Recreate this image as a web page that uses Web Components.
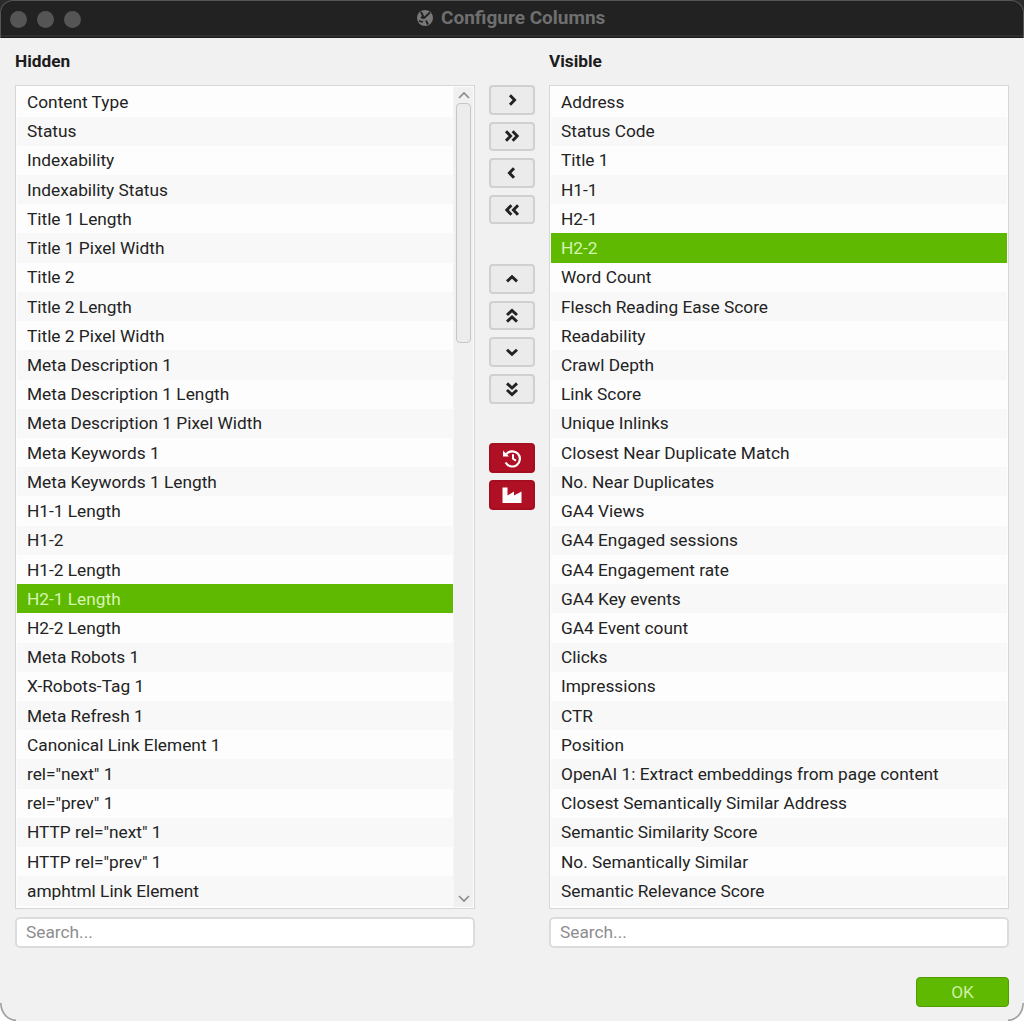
<!DOCTYPE html>
<html>
<head>
<meta charset="utf-8">
<title>Configure Columns</title>
<style>
html, body { margin: 0; padding: 0; background: #fff; }
body { font-family: Roboto, "Liberation Sans", sans-serif; font-size: 17.3px; color: #232323; }
</style>
</head>
<body>
<config-window>
  <title-bar slot="top">Configure Columns</title-bar>

  <column-pane slot="left" label="Hidden" scroll>
    <list-row>Content Type</list-row><list-row>Status</list-row><list-row>Indexability</list-row>
    <list-row>Indexability Status</list-row><list-row>Title 1 Length</list-row><list-row>Title 1 Pixel Width</list-row>
    <list-row>Title 2</list-row><list-row>Title 2 Length</list-row><list-row>Title 2 Pixel Width</list-row>
    <list-row>Meta Description 1</list-row><list-row>Meta Description 1 Length</list-row><list-row>Meta Description 1 Pixel Width</list-row>
    <list-row>Meta Keywords 1</list-row><list-row>Meta Keywords 1 Length</list-row><list-row>H1-1 Length</list-row>
    <list-row>H1-2</list-row><list-row>H1-2 Length</list-row><list-row selected>H2-1 Length</list-row>
    <list-row>H2-2 Length</list-row><list-row>Meta Robots 1</list-row><list-row>X-Robots-Tag 1</list-row>
    <list-row>Meta Refresh 1</list-row><list-row>Canonical Link Element 1</list-row><list-row>rel="next" 1</list-row>
    <list-row>rel="prev" 1</list-row><list-row>HTTP rel="next" 1</list-row><list-row>HTTP rel="prev" 1</list-row>
    <list-row>amphtml Link Element</list-row>
  </column-pane>

  <button-stack slot="middle">
    <nav-button icon="right"></nav-button>
    <nav-button icon="right2"></nav-button>
    <nav-button icon="left"></nav-button>
    <nav-button icon="left2"></nav-button>
    <nav-button icon="up" group></nav-button>
    <nav-button icon="up2"></nav-button>
    <nav-button icon="down"></nav-button>
    <nav-button icon="down2"></nav-button>
    <nav-button icon="history" group danger></nav-button>
    <nav-button icon="factory" danger></nav-button>
  </button-stack>

  <column-pane slot="right" label="Visible">
    <list-row>Address</list-row><list-row>Status Code</list-row><list-row>Title 1</list-row>
    <list-row>H1-1</list-row><list-row>H2-1</list-row><list-row selected>H2-2</list-row>
    <list-row>Word Count</list-row><list-row>Flesch Reading Ease Score</list-row><list-row>Readability</list-row>
    <list-row>Crawl Depth</list-row><list-row>Link Score</list-row><list-row>Unique Inlinks</list-row>
    <list-row>Closest Near Duplicate Match</list-row><list-row>No. Near Duplicates</list-row><list-row>GA4 Views</list-row>
    <list-row>GA4 Engaged sessions</list-row><list-row>GA4 Engagement rate</list-row><list-row>GA4 Key events</list-row>
    <list-row>GA4 Event count</list-row><list-row>Clicks</list-row><list-row>Impressions</list-row>
    <list-row>CTR</list-row><list-row>Position</list-row><list-row>OpenAI 1: Extract embeddings from page content</list-row>
    <list-row>Closest Semantically Similar Address</list-row><list-row>Semantic Similarity Score</list-row><list-row>No. Semantically Similar</list-row>
    <list-row>Semantic Relevance Score</list-row>
  </column-pane>

  <ok-button slot="bottom">OK</ok-button>
</config-window>

<script>
class ConfigWindow extends HTMLElement {
    constructor() {
        super();
        this.attachShadow({ mode: "open" }).innerHTML = `
        <style>
        :host {
            display: block;
            position: relative;
            width: 1024px;
            height: 1021px;
            overflow: hidden;
            background: #fff;
        }
        .sheet {
            display: flex;
            flex-direction: column;
            height: 1021px;
            box-sizing: border-box;
            background: #f1f1f1;
            border-radius: 0 0 15px 15px;
        }
        .columns {
            display: grid;
            grid-template-columns: 460px 74px 460px;
            padding: 0 15px;
        }
        .bottom {
            display: flex;
            justify-content: flex-end;
            padding: 29px 15px 0;
        }
        svg {
            position: absolute;
            bottom: 0;
            width: 18px;
            height: 18px;
        }
        .bl { left: 0; }
        .br { right: 0; transform: scaleX(-1); }
        </style>
        <div class="sheet">
            <slot name="top"></slot>
            <div class="columns">
                <slot name="left"></slot>
                <slot name="middle"></slot>
                <slot name="right"></slot>
            </div>
            <div class="bottom"><slot name="bottom"></slot></div>
        </div>
        <svg class="bl" viewBox="0 0 18 18"><path d="M0.8 0C1 9 7 17 16 17.4" fill="none" stroke="#a0a0a0" stroke-width="1.6"/></svg>
        <svg class="br" viewBox="0 0 18 18"><path d="M0.8 0C1 9 7 17 16 17.4" fill="none" stroke="#a0a0a0" stroke-width="1.6"/></svg>`;
    }
}

class TitleBar extends HTMLElement {
    constructor() {
        super();
        this.attachShadow({ mode: "open" }).innerHTML = `
        <style>
        :host {
            display: block;
            height: 38px;
            background: #2b2b2b;
        }
        .bar {
            display: flex;
            align-items: center;
            position: relative;
            height: 38px;
            box-sizing: border-box;
            padding-left: 9px;
            gap: 9px;
            background: #222;
            border: 1px solid #565656;
            border-bottom: 0;
            border-radius: 13px 13px 0 0;
            box-shadow: inset 0 -1px 0 #1a1a1a, inset 0 -3px 0 #2e2e2e;
        }
        .dot {
            width: 17px;
            height: 17px;
            margin-right: 1px;
            border-radius: 50%;
            background: #555;
        }
        .name {
            position: absolute;
            left: 415px;
            top: 6px;
            display: flex;
            align-items: center;
            gap: 7px;
            font-weight: 700;
            font-size: 19px;
            line-height: 22px;
            color: #6f6f6f;
        }
        </style>
        <div class="bar">
            <span class="dot"></span><span class="dot"></span><span class="dot"></span>
            <div class="name">
                <svg width="18" height="18" viewBox="0 0 18 18">
                    <circle cx="9" cy="9" r="8" fill="#787878"/>
                    <path d="M5 3l3 6 6-5.5M3 12l4 1M10 11.5l2 4" fill="none" stroke="#222" stroke-width="1.8"/>
                    <circle cx="6" cy="8.5" r="1.2" fill="#222"/>
                </svg>
                <slot></slot>
            </div>
        </div>`;
    }
}

class ColumnPane extends HTMLElement {
    constructor() {
        super();
        this.attachShadow({ mode: "open" }).innerHTML = `
        <style>
        :host {
            display: block;
            width: 460px;
        }
        h2 {
            margin: 0;
            height: 47px;
            box-sizing: border-box;
            padding-top: 13px;
            font-size: 17.3px;
            line-height: 20px;
            font-weight: 700;
            color: #1c1c1c;
        }
        .box {
            display: flex;
            height: 824px;
            box-sizing: border-box;
            padding: 1px;
            border: 1px solid #d6d6d6;
            background: #fdfdfd;
        }
        .rows {
            flex: 1;
            display: grid;
            grid-auto-rows: 29.22px;
            align-content: start;
            min-width: 0;
            padding-top: 0.4px;
        }
        .gutter {
            display: none;
            flex-direction: column;
            align-items: center;
            width: 20px;
            box-sizing: border-box;
            background: #f0f0f0;
            border-left: 1px solid #f6f6f6;
        }
        :host([scroll]) .gutter { display: flex; }
        .arrow { flex: none; margin-top: 4px; }
        .thumb {
            width: 15px;
            height: 240px;
            box-sizing: border-box;
            margin-top: 3px;
            background: #ececec;
            border: 1px solid #c6c6c6;
            border-radius: 4px;
        }
        .spacer { flex: 1; }
        .arrow.end { margin: 0 0 4px; }
        .search {
            display: flex;
            align-items: center;
            height: 31px;
            box-sizing: border-box;
            margin-top: 8px;
            padding: 0 0 1px 9px;
            background: #fff;
            border: 2px solid #dcdcdc;
            border-radius: 5px;
            color: #8d8d8d;
        }
        </style>
        <h2>${this.getAttribute("label")}</h2>
        <div class="box">
            <div class="rows"><slot></slot></div>
            <div class="gutter">
                <svg class="arrow" width="14" height="9" viewBox="0 0 14 9"><path d="M2 7l5-5 5 5" fill="none" stroke="#8a8a8a" stroke-width="1.6"/></svg>
                <div class="thumb"></div>
                <div class="spacer"></div>
                <svg class="arrow end" width="14" height="9" viewBox="0 0 14 9"><path d="M2 2l5 5 5-5" fill="none" stroke="#8a8a8a" stroke-width="1.6"/></svg>
            </div>
        </div>
        <div class="search">Search...</div>`;
    }

    connectedCallback() {
        // zebra stripes: even rows stay white
        this.querySelectorAll("list-row").forEach((row, i) => {
            if (i % 2) row.setAttribute("alt", "");
        });
    }
}

class ListRow extends HTMLElement {
    constructor() {
        super();
        this.attachShadow({ mode: "open" }).innerHTML = `
        <style>
        :host {
            display: flex;
            align-items: center;
            padding-left: 10px;
            font-size: 17.3px;
            white-space: nowrap;
            background: #fdfdfd;
            color: #232323;
        }
        :host([alt]) { background: #f8f8f8; }
        :host([selected]) { background: #5fb900; color: #d6f5b4; }
        </style>
        <slot></slot>`;
    }
}

class ButtonStack extends HTMLElement {
    constructor() {
        super();
        this.attachShadow({ mode: "open" }).innerHTML = `
        <style>
        :host {
            display: flex;
            flex-direction: column;
            align-items: center;
            gap: 7px;
            padding-top: 47px;
        }
        </style>
        <slot></slot>`;
    }
}

const NAV_ICONS = {
    right: `<path d="M8 5.2l4.6 4.8L8 14.8"/>`,
    right2: `<path d="M4 5.2l4.6 4.8L4 14.8M10.6 5.2l4.6 4.8-4.6 4.8"/>`,
    left: `<path d="M12 5.2L7.4 10l4.6 4.8"/>`,
    left2: `<path d="M9.4 5.2L4.8 10l4.6 4.8M16 5.2L11.4 10l4.6 4.8"/>`,
    up: `<path d="M5 12.4l5-4.6 5 4.6"/>`,
    up2: `<path d="M5 9l5-4.6L15 9M5 15.6L10 11l5 4.6"/>`,
    down: `<path d="M5 7.8l5 4.6 5-4.6"/>`,
    down2: `<path d="M5 4.4L10 9l5-4.6M5 11l5 4.6 5-4.6"/>`,
    history: `<path stroke-width="2.2" d="M4.3 6.2A7.6 7.6 0 1 1 3.6 14.5"/>
              <path stroke="none" fill="#fff" d="M1 2.6V8.6H7z"/>
              <path stroke-width="2" d="M11 6.2V10.8L14 12.6"/>`,
    factory: `<path stroke="none" fill="#fff" d="M0.5 18V2.5H5.5V10.5L12 6.5V10.5L19.5 6.5V18z"/>`
};

class NavButton extends HTMLElement {
    constructor() {
        super();
        const icon = NAV_ICONS[this.getAttribute("icon")];
        this.attachShadow({ mode: "open" }).innerHTML = `
        <style>
        :host {
            display: flex;
            align-items: center;
            justify-content: center;
            width: 46px;
            height: 29.6px;
            box-sizing: border-box;
            background: #ebebeb;
            border: 2px solid #d0d0d0;
            border-radius: 4px;
        }
        :host([group]) { margin-top: 32.8px; }
        :host([danger]) {
            background: #b01024;
            border-color: #a50e20;
        }
        svg {
            width: 20px;
            height: 20px;
            fill: none;
            stroke: #222;
            stroke-width: 2.9;
        }
        :host([danger]) svg { stroke: #fff; }
        </style>
        <svg viewBox="0 0 20 20">${icon}</svg>`;
    }
}

class OkButton extends HTMLElement {
    constructor() {
        super();
        this.attachShadow({ mode: "open" }).innerHTML = `
        <style>
        :host {
            display: flex;
            align-items: center;
            justify-content: center;
            width: 93px;
            height: 30px;
            box-sizing: border-box;
            background: #5fb900;
            border: 1px solid #4f9c04;
            border-radius: 4px;
            color: #cdf0a4;
            font-size: 17.3px;
        }
        </style>
        <slot></slot>`;
    }
}

customElements.define("config-window", ConfigWindow);
customElements.define("title-bar", TitleBar);
customElements.define("column-pane", ColumnPane);
customElements.define("list-row", ListRow);
customElements.define("button-stack", ButtonStack);
customElements.define("nav-button", NavButton);
customElements.define("ok-button", OkButton);
</script>
</body>
</html>
